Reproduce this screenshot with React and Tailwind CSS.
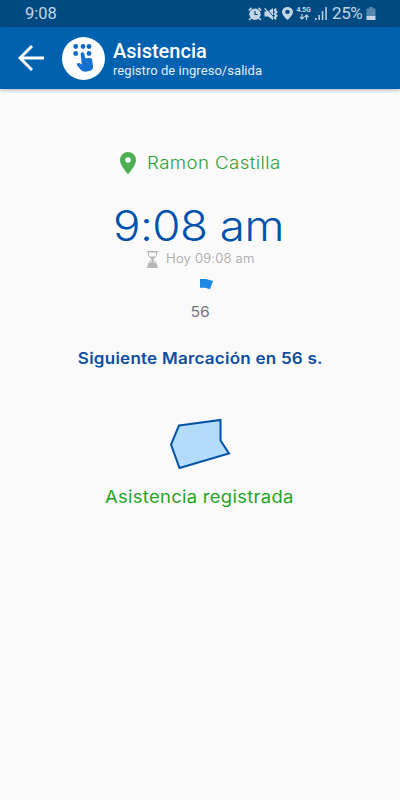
import React from 'react';

const StatusIcons = () => (
  <div className="flex items-center text-[#c3d5e5]">
    {/* Alarm */}
    <svg className="w-[14px] h-[14px]" viewBox="0 0 14 14" fill="none">
      <path d="M.8 3.5 3.5.8M10.500.8l2.700 2.700M2.7 11.3 1.2 13M11.3 11.3l1.5 1.7" stroke="currentColor" strokeWidth="1.7" />
      <circle cx="7" cy="7.2" r="5.7" fill="currentColor" />
      <path d="M7 4v3.5h2.8" stroke="#004a82" strokeWidth="1.2" />
    </svg>
    {/* Sound off, vibrating */}
    <svg className="w-[15px] h-[14px] ml-[2px]" viewBox="0 0 15 14" fill="none">
      <path d="M0.5 4.500h3.500L9 1v12L4 9.500H.500z" fill="currentColor" />
      <path d="M2 .8 9.500 9.800" stroke="#004a82" strokeWidth="1" />
      <path d="M0.7 1.2 9 12" stroke="currentColor" strokeWidth="1.300" />
      <path d="m12 1.500-1.300 1.800 1.800 1.800-1.800 1.800 1.800 1.800-1.800 1.800 1.300 1.800" stroke="currentColor" strokeWidth="2" />
    </svg>
    <svg className="w-[11px] h-[13px] ml-[3px]" viewBox="0 0 10 13" preserveAspectRatio="none">
      <path fillRule="evenodd" fill="currentColor" d="M5 0a5 5 0 0 0-5 5c0 3.5 5 8 5 8s5-4.500 5-8A5 5 0 0 0 5 0zm0 2.800a2.100 2.100 0 1 1 0 4.200 2.100 2.100 0 0 1 0-4.200z" />
    </svg>
    <div className="ml-[3px] w-[15px] flex flex-col items-center">
      <span className="font-['Roboto'] text-[7px] leading-[7px] font-bold tracking-[-0.2px]">4.5G</span>
      <svg className="w-[10px] h-[6px]" viewBox="0 0 10 6" fill="none" stroke="currentColor" strokeWidth="1.2">
        <path d="M3 0v5M1 3l2 2 2-2M7.500 6V1M5.500 3l2-2 2 2" />
      </svg>
    </div>
    <svg className="w-[12px] h-[13px] ml-[4px]" viewBox="0 0 12 13" fill="currentColor">
      <path d="M0 11h1.500v2H0zM3.400 8h1.500v5H3.400zM6.800 4h1.500v9H6.800zM10.300 0h1.500v13h-1.500z" />
    </svg>
    <span className="ml-[5px] w-[30px] whitespace-nowrap font-['Roboto'] text-[17px] leading-none tracking-[-0.4px]">25%</span>
    <svg className="w-[10px] h-[13px] ml-[4px]" viewBox="0 0 10 13" fill="currentColor">
      <path opacity=".45" d="M3 0h4v1.500h2.500V9H.500V1.500H3z" />
      <path d="M.500 9h9v4h-9z" />
    </svg>
  </div>
);

const Header = () => (
  <header className="h-[62px] bg-[#0061af] shadow-[0_1px_4px_rgba(0,0,0,0.3)] flex items-center pl-[18px] text-white font-['Roboto',sans-serif]">
    <svg className="w-[27px] h-[26px]" viewBox="0 0 27 26" fill="none" stroke="currentColor" strokeWidth="2.900">
      <path d="M26 13H2M14 1 2 13l12 12" />
    </svg>
    <div className="ml-[17px] w-[43px] h-[43px] rounded-full bg-white">
      <svg className="w-[43px] h-[43px]" viewBox="0 0 43 43">
        <g fill="#1268c2">
          <circle cx="13.700" cy="9.500" r="2.400" />
          <circle cx="21" cy="9.500" r="2.400" />
          <circle cx="27" cy="9.500" r="2.400" />
          <circle cx="13.700" cy="16.500" r="2.400" />
          <circle cx="27" cy="16.500" r="2.400" />
        </g>
        <path fill="#1670cf" d="M18.700 17.500c-.2-2.600 3.300-3 3.700-.5l.8 4.300 4.600-.3c1.500 0 2.200.8 2.400 2.100l.8 6.200c.3 2-.5 3.400-2.200 4.200-2.200 1-5 1.400-7.300 1-1.200-.2-1.900-.9-2.700-1.700L15.200 28.500c-.7-1.100-.2-2.200.9-2.500.8-.2 1.500.1 2.200.5l1.500.9z" />
      </svg>
    </div>
    <div className="ml-[8px] pt-[3px]">
      <h1 className="text-[20px] leading-[22px] font-medium">Asistencia</h1>
      <p className="text-[13px] leading-[17px] tracking-[0.050px] text-[#e3edf6]">registro de ingreso/salida</p>
    </div>
  </header>
);

const App = () => {
  return (
    <div className="w-full h-[800px] overflow-hidden bg-[#fafafa] flex flex-col font-['Inter',sans-serif]">
      <div className="h-[27px] shrink-0 bg-[#004a82] flex items-center justify-between pl-[25px] pr-[24px]">
        <span className="pt-[1px] font-['Roboto'] text-[16.500px] leading-none text-[#c3d5e5]">9:08</span>
        <StatusIcons />
      </div>
      <Header />

      <main className="flex flex-col items-center">
        {/* Location */}
        <div className="mt-[61px] h-[26px] flex items-center">
          <svg className="w-[16px] h-[22px]" viewBox="0 0 16 22">
            <path fillRule="evenodd" fill="#4caf50" d="M8 0a8 8 0 0 0-8 8c0 6 8 14 8 14s8-8 8-14a8 8 0 0 0-8-8zm0 5.200a2.800 2.800 0 1 1 0 5.600 2.800 2.800 0 0 1 0-5.600z" />
          </svg>
          <span className="ml-[11px] pt-[1px] w-[134px] whitespace-nowrap origin-left scale-x-[1.1] text-[17px] font-light tracking-[0.350px] text-[#2fa037]">Ramon Castilla</span>
        </div>

        {/* Clock */}
        <div className="mt-[25px] mr-[3px] h-[49px] leading-[49px] whitespace-nowrap scale-x-[1.09] text-[42px] font-light tracking-[-0.500px] text-[#0052ad]">9:08 am</div>
        <div className="h-[18px] w-[106px] flex items-center text-[#9e9e9e]">
          <svg className="w-[11px] h-[17px] shrink-0" viewBox="0 0 11 17">
            <path fill="#b5b5b5" d="M0 0h11v1.500H0zM0 15.500h11V17H0zM3 5.500h5L6 8v2.500L9.500 13v3h-8v-3L5 10.500V8z" />
            <path fill="none" stroke="#b5b5b5" d="M1.500 1.500v3l3.500 4-3.500 4V15.500M9.500 1.500v3L6 8.500l3.500 4V15.500" />
          </svg>
          <span className="ml-[8px] whitespace-nowrap origin-left scale-x-[1.045] text-[12.500px] font-light tracking-[0.200px]">Hoy 09:08 am</span>
        </div>

        {/* Countdown */}
        <svg className="mt-[10px] ml-[13px] w-[13px] h-[12px]" viewBox="0 0 13 12">
          <path fill="#1e88e5" d="M0 1 6 1 13 3 10 11.200 5 9.800H0z" />
        </svg>
        <div className="mt-[11px] h-[22px] leading-[22px] scale-x-[1.05] text-[15px] text-[#757780]">56</div>

        <p className="mt-[25px] h-[22px] leading-[22px] whitespace-nowrap scale-x-[1.1] text-[15.500px] font-semibold tracking-[0.200px] text-[#0b4da2]">
          Siguiente Marcación en 56 s.
        </p>

        <svg className="mt-[48px] w-[62px] h-[52px]" viewBox="0 0 62 52">
          <path fill="#b3dcfb" stroke="#0052a5" strokeWidth="2" d="M10 7.500 51.500 2v20.500L60 35.500 10.500 50 2 26.500z" />
        </svg>
        <p className="mt-[14px] mr-[1px] h-[26px] leading-[26px] whitespace-nowrap scale-x-[1.08] text-[17px] tracking-[0.300px] text-[#1fa324]">Asistencia registrada</p>
      </main>
    </div>
  );
};

export default App;
